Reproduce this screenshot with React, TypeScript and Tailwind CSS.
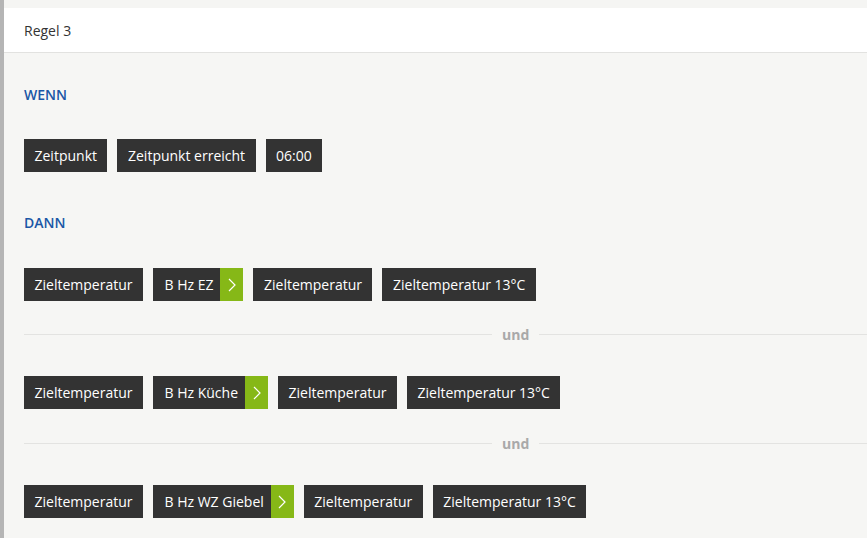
import React from 'react';

const Chip = ({ label }: { label: string }) => (
  <div className="h-[33px] px-[10.5px] flex items-center bg-[#333333] text-white text-[14px] whitespace-nowrap">
    {label}
  </div>
);

const DeviceChip = ({ label }: { label: string }) => (
  <div className="h-[33px] flex items-stretch bg-[#333333] text-white text-[14px] whitespace-nowrap">
    <div className="pl-[11.5px] pr-[7px] flex items-center">{label}</div>
    <div className="w-[23px] flex items-center justify-center bg-[#86b817]">
      <svg width="8" height="14" viewBox="0 0 8 14" fill="none">
        <path d="M1 1l6 6-6 6" stroke="white" strokeWidth="1.2" />
      </svg>
    </div>
  </div>
);

const ActionRow = ({ device }: { device: string }) => (
  <div className="flex gap-[10px]">
    <Chip label="Zieltemperatur" />
    <DeviceChip label={device} />
    <Chip label="Zieltemperatur" />
    <Chip label="Zieltemperatur 13°C" />
  </div>
);

const Divider = () => (
  <div className="flex items-center gap-[10px] h-[20px]">
    <div className="w-[468px] shrink-0 h-px bg-[#e3e3e1]" />
    <span className="text-[14px] font-bold text-[#a9a9a9]">und</span>
    <div className="flex-1 h-px bg-[#e3e3e1]" />
  </div>
);

export default function App() {
  return (
    <div
      className="flex w-full h-[538px] overflow-hidden bg-[#f6f6f4]"
      style={{ fontFamily: '"Open Sans", sans-serif' }}
    >
      <div className="w-[4px] shrink-0 bg-[#b5b5b5]" />
      <div className="flex-1 flex flex-col">
        <div className="h-[8px] bg-[#f5f5f3]" />
        <div className="h-[45px] bg-white flex items-center pl-[20px] text-[14px] text-[#333333] border-b border-[#e2e2e0]">
          Regel 3
        </div>
        <div className="pl-[20px] pt-[32px]">
          <div className="text-[14px] leading-[20px] font-semibold text-[#1a57a6]">WENN</div>
          <div className="flex gap-[10px] mt-[34px]">
            <Chip label="Zeitpunkt" />
            <Chip label="Zeitpunkt erreicht" />
            <Chip label="06:00" />
          </div>
          <div className="text-[14px] leading-[20px] font-semibold text-[#1a57a6] mt-[41px]">DANN</div>
          <div className="flex flex-col mt-[35px]">
            <ActionRow device="B Hz EZ" />
            <div className="mt-[23px] mb-[32px]"><Divider /></div>
            <ActionRow device="B Hz Küche" />
            <div className="mt-[24px] mb-[32px]"><Divider /></div>
            <ActionRow device="B Hz WZ Giebel" />
          </div>
        </div>
      </div>
    </div>
  );
}
